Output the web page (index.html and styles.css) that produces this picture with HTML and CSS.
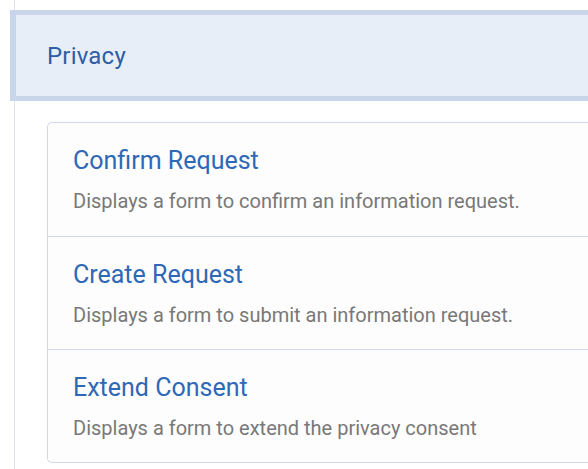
FILE: index.html
```html
<!DOCTYPE html>
<html>
<head>
<meta charset="utf-8">
<link rel="stylesheet" href="styles.css">
</head>
<body>
<div class="rail">
  <div class="section-header">
    <h2 class="section-title">Privacy</h2>
  </div>
  <div class="card">
    <div class="item">
      <a class="item-title">Confirm Request</a>
      <p class="item-desc">Displays a form to confirm an information request.</p>
    </div>
    <div class="item">
      <a class="item-title">Create Request</a>
      <p class="item-desc">Displays a form to submit an information request.</p>
    </div>
    <div class="item">
      <a class="item-title">Extend Consent</a>
      <p class="item-desc">Displays a form to extend the privacy consent</p>
    </div>
  </div>
</div>
</body>
</html>
```
FILE: styles.css
```css
html, body {
  margin: 0;
  padding: 0;
  background: #ffffff;
  font-family: Roboto, "Noto Sans", sans-serif;
  overflow: hidden;
}
.rail {
  margin-left: 14px;
  border-left: 1px solid #dfe3ea;
  height: 469px;
  padding-top: 10px;
  box-sizing: border-box;
}
.section-header {
  margin-left: -5px;
  height: 91px;
  box-sizing: border-box;
  background: #e8eef8;
  border-top: 5px solid #c8d5ea;
  border-bottom: 5px solid #c8d5ea;
  border-left: 6px solid #c8d5ea;
  display: flex;
  align-items: center;
  padding-left: 31px;
}
.section-title {
  margin: 0;
  font-size: 24px;
  font-weight: 400;
  letter-spacing: 0.2px;
  color: #2d5ea6;
}
.card {
  margin: 21px 0 0 32px;
  border: 1px solid #cfd9e8;
  border-right: none;
  border-radius: 5px 0 0 5px;
  background: #fdfdfd;
}
.item {
  height: 113px;
  box-sizing: border-box;
  padding: 23px 0 0 25px;
  border-top: 1px solid #cfd9e8;
}
.item:first-child {
  border-top: none;
}
.item-title {
  display: block;
  font-size: 25px;
  line-height: 30px;
  color: #2f68b6;
}
.item-desc {
  margin: 13px 0 0;
  font-size: 20px;
  line-height: 24px;
  color: #787878;
}
```
